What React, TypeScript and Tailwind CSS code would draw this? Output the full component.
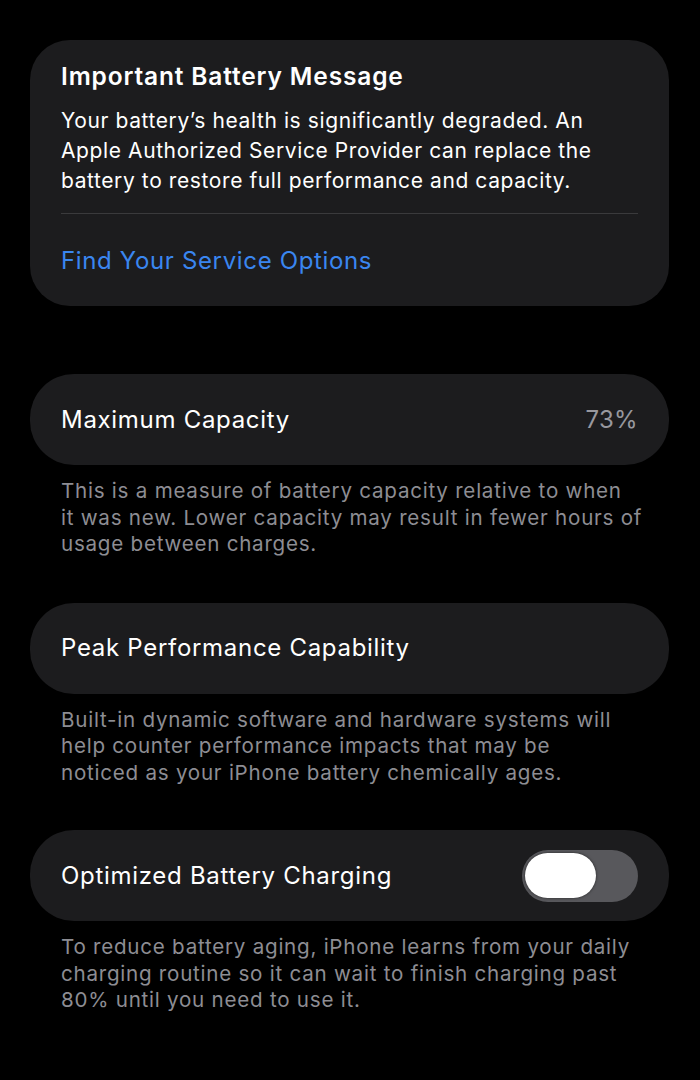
import React from 'react'

const font = { fontFamily: 'Inter, "Noto Sans", sans-serif' }

function Row({ label, children }: { label: string; children?: React.ReactNode }) {
  return (
    <div className="flex h-[91px] items-center justify-between rounded-[44px] bg-[#1c1c1e] pl-[31px] pr-[31px]">
      <span className="text-[24px] leading-[30px] text-white tracking-[0.7px]">{label}</span>
      {children}
    </div>
  )
}

// footer text under each group, lines kept as in the original wrap
function Note({ lines }: { lines: string[] }) {
  return (
    <p className="mt-[13px] whitespace-nowrap px-[31px] text-[20.6px] leading-[26.5px] text-[#8d8d93] tracking-[0.75px]">
      {lines.map((l, i) => (
        <span key={i} className="block">{l}</span>
      ))}
    </p>
  )
}

export default function App() {
  return (
    <div className="min-h-[1080px] w-[700px] bg-black pl-[30px] pr-[31px] pt-[40px]" style={font}>
      {/* Battery message card */}
      <div className="rounded-[40px] bg-[#1c1c1e] px-[31px] pb-[30px] pt-[21px]">
        <h2 className="text-[24.5px] font-semibold leading-[30px] text-white tracking-[0.85px]">
          Important Battery Message
        </h2>
        <p className="mt-[15px] text-[21px] leading-[30px] text-white tracking-[0.6px]">
          Your battery’s health is significantly degraded. An Apple Authorized Service Provider can replace the battery to restore full performance and capacity.
        </p>
        <div className="mt-[17px] h-px bg-[#3a3a3c]" />
        <a className="mt-[32px] block text-[24px] leading-[30px] text-[#3a86f0] tracking-[0.65px]">Find Your Service Options</a>
      </div>

      <div className="mt-[68px]">
        <Row label="Maximum Capacity">
          <span className="text-[24px] text-[#98989e] tracking-[0.3px]">73%</span>
        </Row>
        <Note
          lines={[
            'This is a measure of battery capacity relative to when',
            'it was new. Lower capacity may result in fewer hours of',
            'usage between charges.',
          ]}
        />
      </div>

      <div className="mt-[45px]">
        <Row label="Peak Performance Capability" />
        <Note
          lines={[
            'Built-in dynamic software and hardware systems will',
            'help counter performance impacts that may be',
            'noticed as your iPhone battery chemically ages.',
          ]}
        />
      </div>

      <div className="mt-[44px]">
        <Row label="Optimized Battery Charging">
          <div className="flex h-[52px] w-[116px] items-center rounded-full bg-[#58585c] pl-[3px]">
            <div className="h-[45px] w-[71px] rounded-full bg-white shadow-[0_0_3px_rgba(0,0,0,0.6)]" />
          </div>
        </Row>
        <Note
          lines={[
            'To reduce battery aging, iPhone learns from your daily',
            'charging routine so it can wait to finish charging past',
            '80% until you need to use it.',
          ]}
        />
      </div>
    </div>
  )
}
